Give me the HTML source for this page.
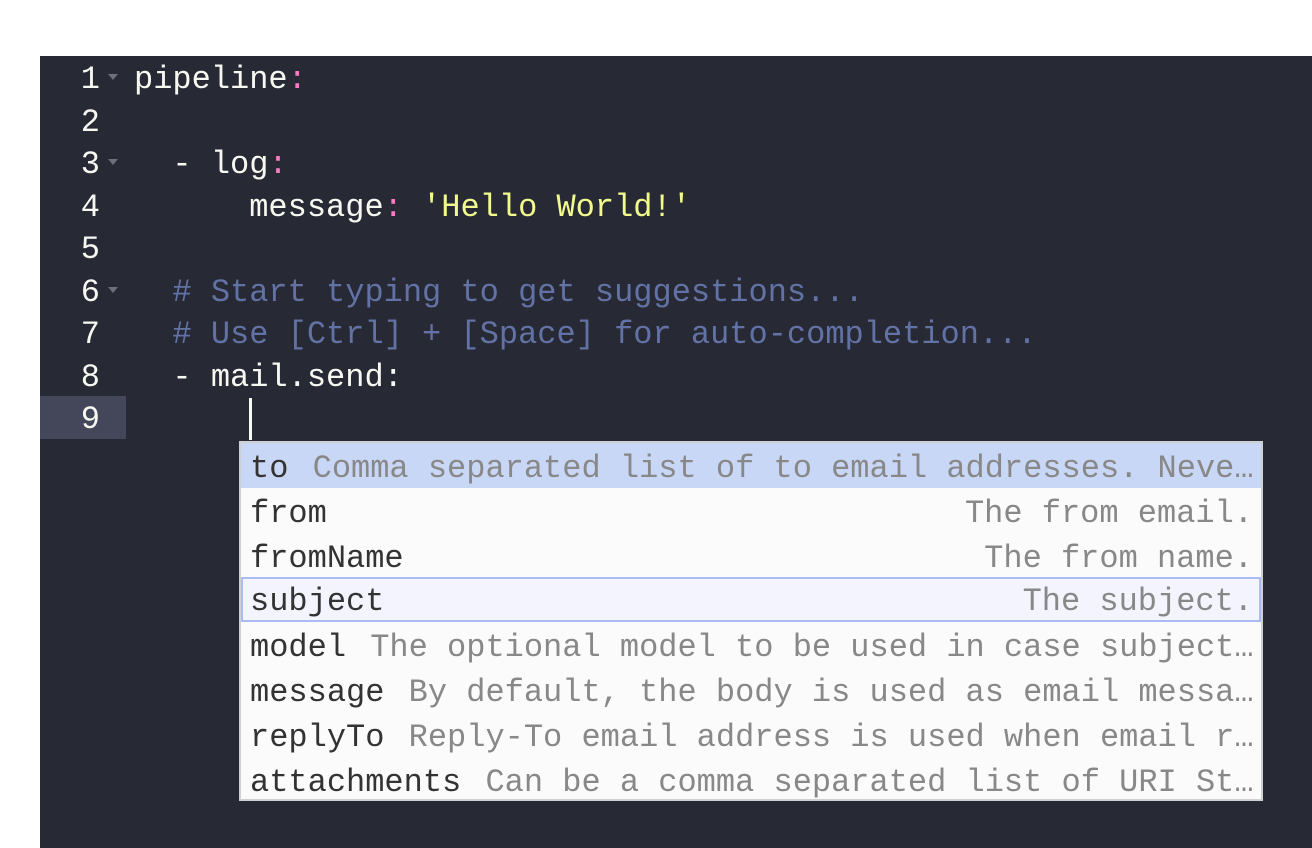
<!DOCTYPE html>
<html><head><meta charset="utf-8"><style>
*{margin:0;padding:0;box-sizing:border-box}
body{width:1312px;height:848px;background:#fff;position:relative;overflow:hidden;font-family:"Liberation Mono",monospace;font-size:32px}
#ed{position:absolute;left:40px;top:56px;width:1272px;height:792px;background:#272935}
.ln{position:absolute;left:0;width:86px;height:42.5px;line-height:42.5px;color:#f8f8f2;text-align:right;padding-right:26px;padding-top:3px;overflow:hidden}
.ln.act{background:#44475a}
.fold{position:absolute;left:68px;width:0;height:0;border-left:5px solid transparent;border-right:5px solid transparent;border-top:6px solid #6d6f7d}
.cl{position:absolute;left:94px;height:42.5px;line-height:42.5px;padding-top:3px;color:#f8f8f2;white-space:pre}
.p{color:#ff79c6}.s{color:#f1fa8c}.c{color:#6272a4}
#cur{position:absolute;left:209px;top:342px;width:3px;height:42px;background:#f8f8f2}
#pop{position:absolute;left:239px;top:441px;width:1024px;height:360px;background:#fbfbfb;border:2px solid #cfd0d4}
.r{position:absolute;left:0;width:1020px;height:44.8px;line-height:44.8px;padding:4px 8px 0 9px;color:#333;white-space:pre;display:flex;justify-content:space-between;overflow:hidden}
.r .d{color:#888}
.r .m{margin-left:5px}
.sel{background:#c9d7f6}
.hov{background:#f3f4fd;border:2px solid #a9bcf4;line-height:41px}
</style></head><body>
<div id="ed">
<div class="ln" style="top:0">1</div><div class="fold" style="top:18px"></div>
<div class="ln" style="top:42.5px">2</div>
<div class="ln" style="top:85px">3</div><div class="fold" style="top:103px"></div>
<div class="ln" style="top:127.5px">4</div>
<div class="ln" style="top:170px">5</div>
<div class="ln" style="top:212.5px">6</div><div class="fold" style="top:231px"></div>
<div class="ln" style="top:255px">7</div>
<div class="ln" style="top:297.5px">8</div>
<div class="ln act" style="top:340px">9</div>

<div class="cl" style="top:0">pipeline<span class="p">:</span></div>
<div class="cl" style="top:85px">  - log<span class="p">:</span></div>
<div class="cl" style="top:127.5px">      message<span class="p">:</span> <span class="s">'Hello World!'</span></div>
<div class="cl c" style="top:212.5px">  # Start typing to get suggestions...</div>
<div class="cl c" style="top:255px">  # Use [Ctrl] + [Space] for auto-completion...</div>
<div class="cl" style="top:297.5px">  - mail.send:</div>
<div id="cur"></div>
</div>
<div id="pop">
<div class="r sel" style="top:0"><span>to <span class="d m">Comma separated list of to email addresses. Neve…</span></span></div>
<div class="r" style="top:44.8px"><span>from</span><span class="d">The from email.</span></div>
<div class="r" style="top:89.6px"><span>fromName</span><span class="d">The from name.</span></div>
<div class="r hov" style="top:134.4px;padding-left:7px;padding-right:6px;padding-top:2px"><span>subject</span><span class="d">The subject.</span></div>
<div class="r" style="top:179.2px"><span>model <span class="d m">The optional model to be used in case subject…</span></span></div>
<div class="r" style="top:224px"><span>message <span class="d m">By default, the body is used as email messa…</span></span></div>
<div class="r" style="top:268.8px"><span>replyTo <span class="d m">Reply-To email address is used when email r…</span></span></div>
<div class="r" style="top:313.6px"><span>attachments <span class="d m">Can be a comma separated list of URI St…</span></span></div>
</div>
</body></html>
